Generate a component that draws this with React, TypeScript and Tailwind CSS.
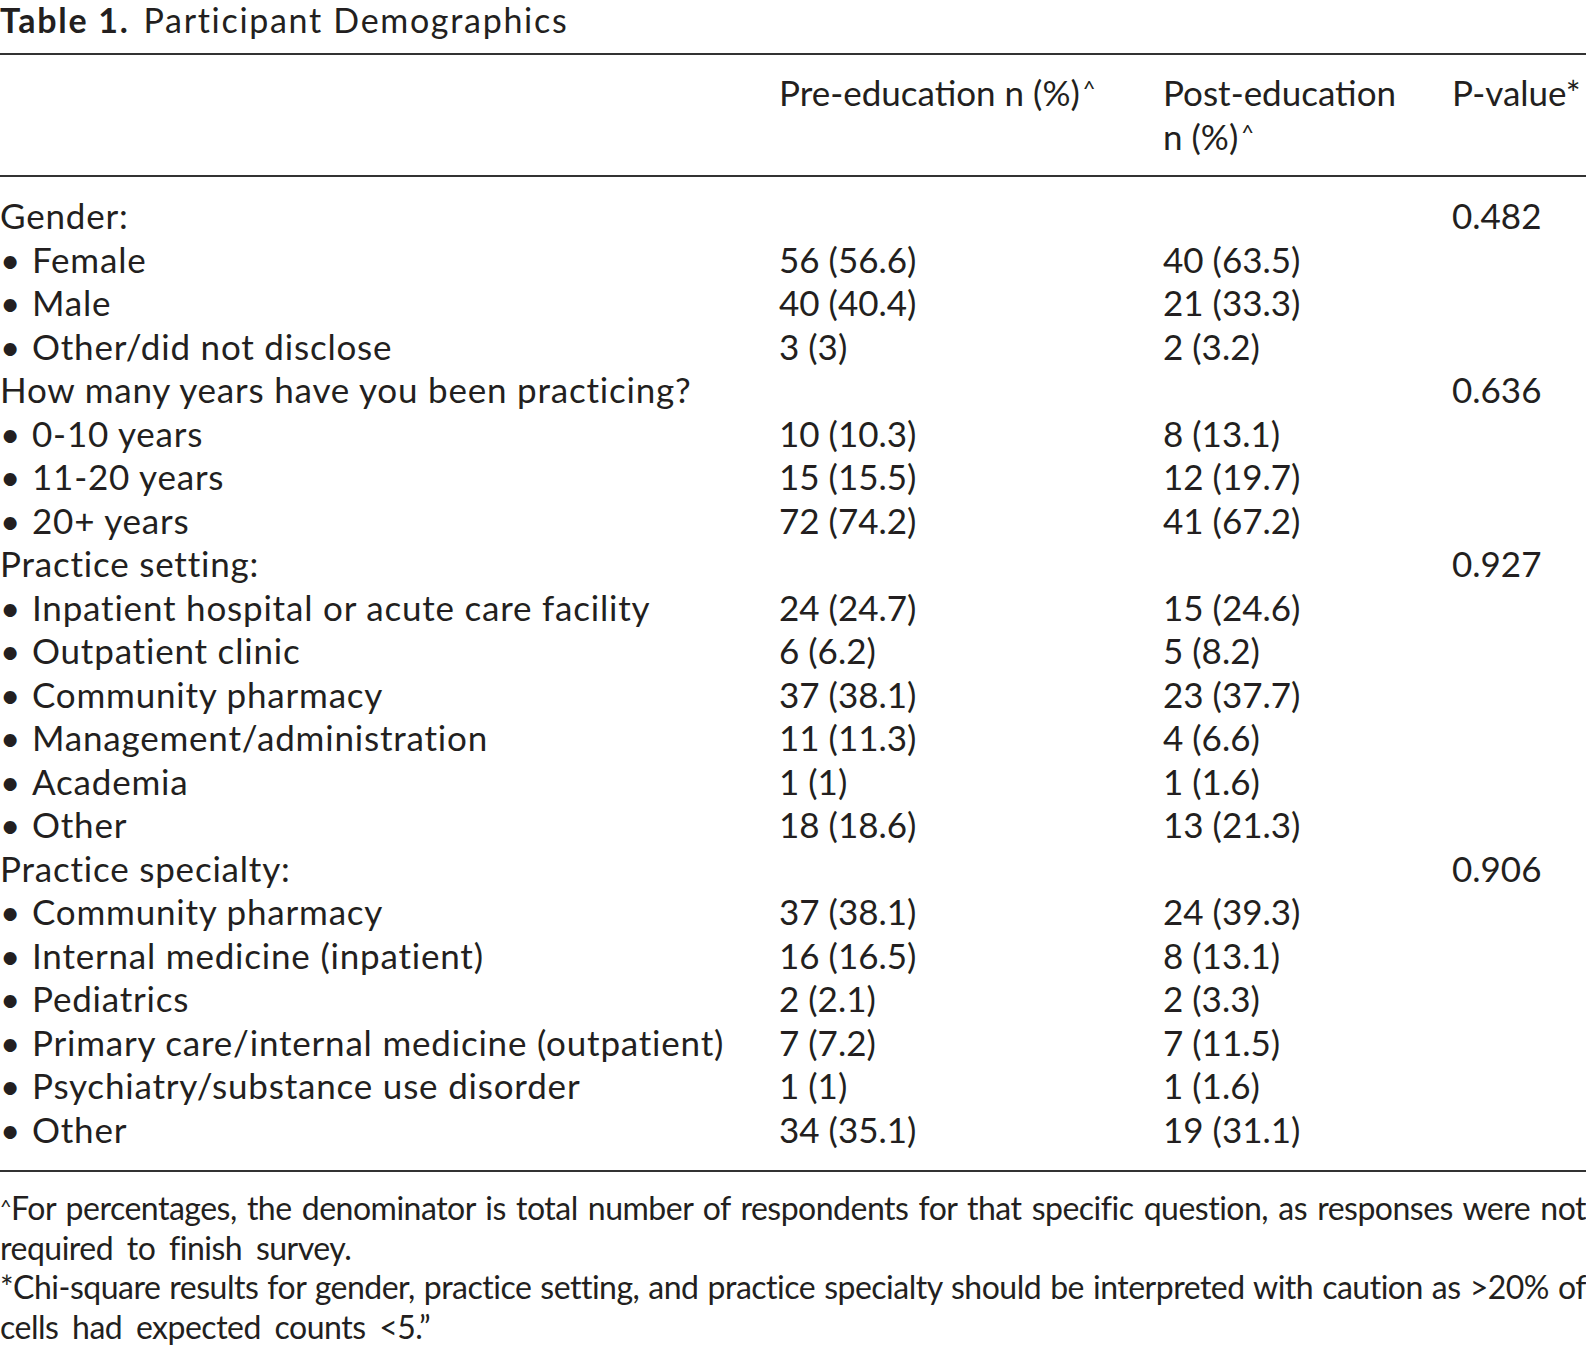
import React from 'react';

type Row = { label: string; pre?: string; post?: string; p?: string; sub?: boolean };

const rows: Row[] = [
  { label: 'Gender:', p: '0.482' },
  { label: 'Female', pre: '56 (56.6)', post: '40 (63.5)', sub: true },
  { label: 'Male', pre: '40 (40.4)', post: '21 (33.3)', sub: true },
  { label: 'Other/did not disclose', pre: '3 (3)', post: '2 (3.2)', sub: true },
  { label: 'How many years have you been practicing?', p: '0.636' },
  { label: '0-10 years', pre: '10 (10.3)', post: '8 (13.1)', sub: true },
  { label: '11-20 years', pre: '15 (15.5)', post: '12 (19.7)', sub: true },
  { label: '20+ years', pre: '72 (74.2)', post: '41 (67.2)', sub: true },
  { label: 'Practice setting:', p: '0.927' },
  { label: 'Inpatient hospital or acute care facility', pre: '24 (24.7)', post: '15 (24.6)', sub: true },
  { label: 'Outpatient clinic', pre: '6 (6.2)', post: '5 (8.2)', sub: true },
  { label: 'Community pharmacy', pre: '37 (38.1)', post: '23 (37.7)', sub: true },
  { label: 'Management/administration', pre: '11 (11.3)', post: '4 (6.6)', sub: true },
  { label: 'Academia', pre: '1 (1)', post: '1 (1.6)', sub: true },
  { label: 'Other', pre: '18 (18.6)', post: '13 (21.3)', sub: true },
  { label: 'Practice specialty:', p: '0.906' },
  { label: 'Community pharmacy', pre: '37 (38.1)', post: '24 (39.3)', sub: true },
  { label: 'Internal medicine (inpatient)', pre: '16 (16.5)', post: '8 (13.1)', sub: true },
  { label: 'Pediatrics', pre: '2 (2.1)', post: '2 (3.3)', sub: true },
  { label: 'Primary care/internal medicine (outpatient)', pre: '7 (7.2)', post: '7 (11.5)', sub: true },
  { label: 'Psychiatry/substance use disorder', pre: '1 (1)', post: '1 (1.6)', sub: true },
  { label: 'Other', pre: '34 (35.1)', post: '19 (31.1)', sub: true },
];

const Caret = () => <sup className="text-[22px] relative -top-[10px] ml-[3px]">^</sup>;

export default function App() {
  return (
    <div className="w-[1586px] h-[1345px] bg-white text-[#231f20] font-['Lato',sans-serif] overflow-hidden">
      <h1 className="text-[34px] leading-[34px] pt-[3px] h-[53px] whitespace-nowrap tracking-[1.7px]">
        <span className="font-bold">Table 1.</span>
        <span className="ml-[14px]">Participant Demographics</span>
      </h1>

      <div className="border-t-2 border-b-2 border-[#333] grid grid-cols-[779px_384px_289px_134px] text-[35px] leading-[44px] pt-[15px] pb-[17px]">
        <div />
        <div className="whitespace-nowrap">Pre-education n (%)<Caret /></div>
        <div>
          Post-education
          <br />
          n (%)<Caret />
        </div>
        <div className="whitespace-nowrap">P-value*</div>
      </div>

      <div className="border-b-2 border-[#333] grid grid-cols-[779px_384px_289px_134px] text-[35px] leading-[43.5px] pt-[17px] pb-[19px]">
        {rows.map((r, i) => (
          <React.Fragment key={i}>
            <div className="whitespace-nowrap tracking-[0.8px]">
              {r.sub && <span className="inline-block w-[32px]">•</span>}
              {r.label}
            </div>
            <div className="whitespace-nowrap">{r.pre}</div>
            <div className="whitespace-nowrap">{r.post}</div>
            <div className="whitespace-nowrap">{r.p}</div>
          </React.Fragment>
        ))}
      </div>

      <div className="text-[32px] leading-[39.5px] pt-[16px] tracking-[-0.5px]">
        <p className="text-justify [text-align-last:justify] whitespace-nowrap">
          <sup className="text-[20px] relative -top-[6px]">^</sup>For percentages, the denominator is total number of respondents for that specific question, as responses were not
        </p>
        <p className="[word-spacing:6px]">required to finish survey.</p>
        <p className="text-justify [text-align-last:justify] whitespace-nowrap">
          *Chi-square results for gender, practice setting, and practice specialty should be interpreted with caution as &gt;20% of
        </p>
        <p className="[word-spacing:6px]">cells had expected counts &lt;5.”</p>
      </div>
    </div>
  );
}
